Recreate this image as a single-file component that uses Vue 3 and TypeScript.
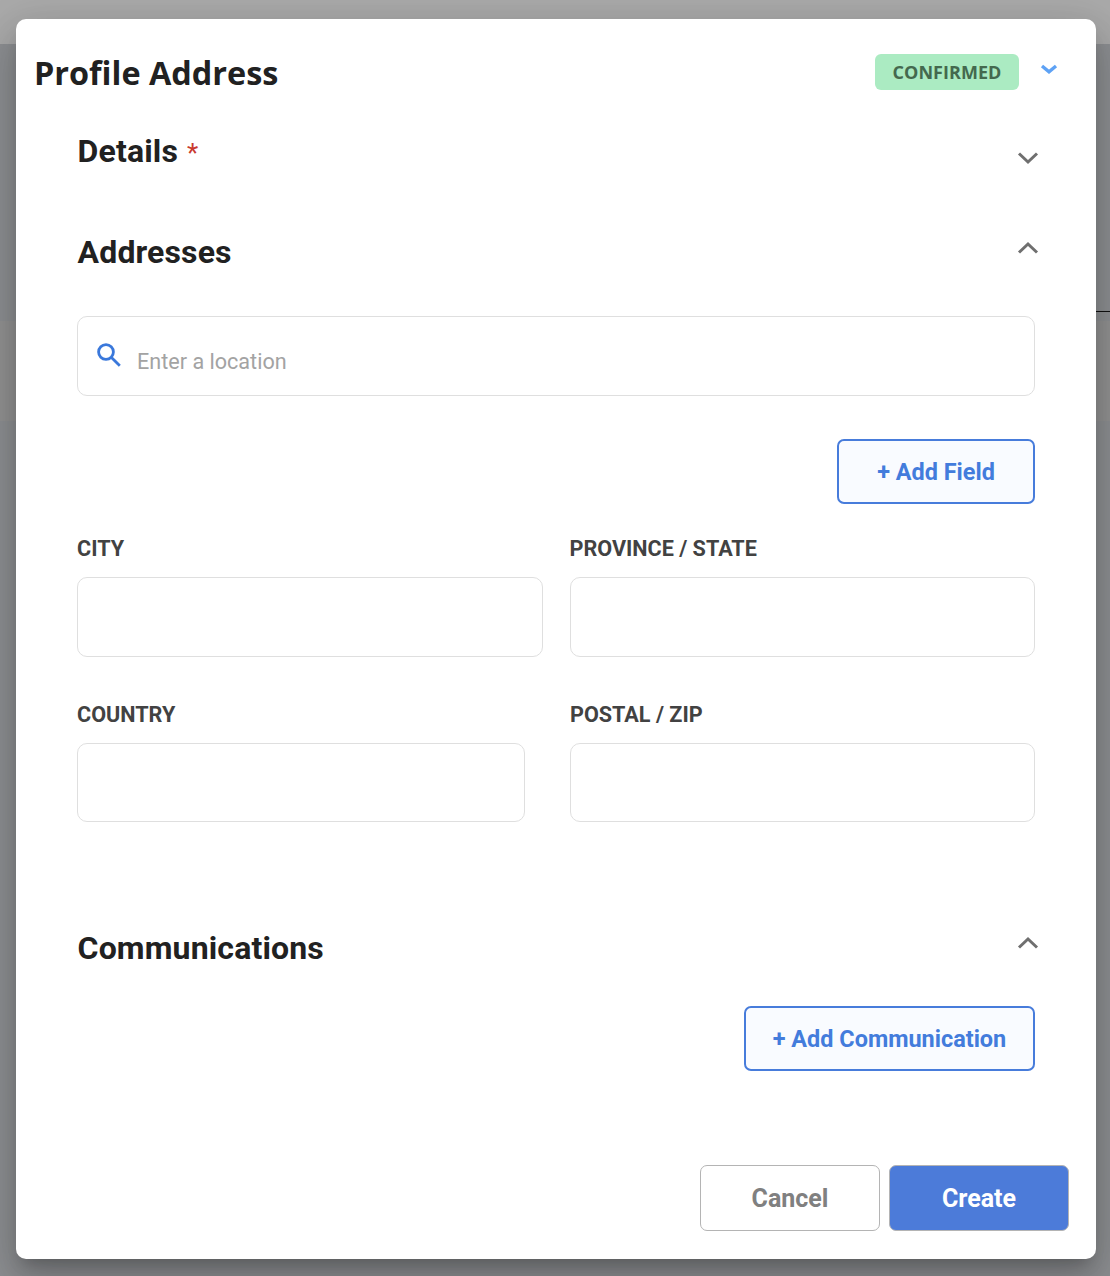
<script setup lang="ts">
interface Field { label: string; narrow: boolean }
const firstRow: Field[] = [
  { label: 'CITY', narrow: false },
  { label: 'PROVINCE / STATE', narrow: false },
]
const secondRow: Field[] = [
  { label: 'COUNTRY', narrow: true },
  { label: 'POSTAL / ZIP', narrow: false },
]
</script>

<template>
  <div class="page">
    <div class="band band-top"></div>
    <div class="band band-mid"></div>
    <div class="rule"></div>
    <section class="modal">
      <header class="head">
        <h1>Profile Address</h1>
        <div class="status">
          <span class="badge">CONFIRMED</span>
          <svg class="badge-chev" width="18" height="10" viewBox="0 0 18 10"><path d="M2 2l7 5.8L16 2" fill="none" stroke="#5ea2f5" stroke-width="3.4"/></svg>
        </div>
      </header>
      <div class="body">
        <div class="sec sec-details">
          <h2>Details <span class="req">*</span></h2>
          <svg class="chev" width="24" height="14" viewBox="0 0 24 14"><path d="M3 2.5l9 8.5 9-8.5" fill="none" stroke="#6f6f6f" stroke-width="3"/></svg>
        </div>
        <div class="sec sec-addr">
          <h2>Addresses</h2>
          <svg class="chev up" width="24" height="14" viewBox="0 0 24 14"><path d="M3 11.5l9-8.5 9 8.5" fill="none" stroke="#6f6f6f" stroke-width="3"/></svg>
        </div>
        <div class="search">
          <svg width="26" height="26" viewBox="0 0 26 26"><circle cx="10" cy="10" r="7.4" fill="none" stroke="#3a78db" stroke-width="2.8"/><path d="M15.2 15.2l8.6 8.6" stroke="#3a78db" stroke-width="2.8" fill="none"/></svg>
          <span>Enter a location</span>
        </div>
        <div class="actions actions-field"><button class="outline field-btn">+ Add Field</button></div>
        <div class="row row-one">
          <label v-for="f in firstRow" :key="f.label" class="field">
            <span>{{ f.label }}</span>
            <div class="box"></div>
          </label>
        </div>
        <div class="row row-two">
          <label v-for="f in secondRow" :key="f.label" class="field" :class="{ narrow: f.narrow }">
            <span>{{ f.label }}</span>
            <div class="box"></div>
          </label>
        </div>
        <div class="sec sec-comm">
          <h2>Communications</h2>
          <svg class="chev up" width="24" height="14" viewBox="0 0 24 14"><path d="M3 11.5l9-8.5 9 8.5" fill="none" stroke="#6f6f6f" stroke-width="3"/></svg>
        </div>
        <div class="actions actions-comm"><button class="outline comm-btn">+ Add Communication</button></div>
      </div>
      <footer class="foot">
        <button class="cancel">Cancel</button>
        <button class="create">Create</button>
      </footer>
    </section>
  </div>
</template>

<style>
html, body { margin: 0; padding: 0; }
</style>

<style scoped>
.page {
  position: relative;
  width: 1110px;
  height: 1276px;
  overflow: hidden;
  padding: 19px 14px 0 16px;
  box-sizing: border-box;
  background: #8e9093;
  font-family: Roboto, sans-serif;
}
.band { position: absolute; left: 0; right: 0; }
.band-top { top: 0; height: 44px; background: #aaaaaa; }
.band-mid { top: 321px; height: 100px; background: #939393; }
.rule { position: absolute; left: 1096px; right: 0; top: 311px; height: 1px; background: #111; }
.modal {
  position: relative;
  width: 1080px;
  height: 1240px;
  background: #fff;
  border-radius: 10px;
  box-shadow: 0 11px 15px -7px rgba(0,0,0,.2), 0 24px 38px 3px rgba(0,0,0,.14), 0 9px 46px 8px rgba(0,0,0,.12);
  display: flex;
  flex-direction: column;
}
.head { height: 71px; display: flex; justify-content: space-between; align-items: flex-start; padding: 0 38px 0 19px; }
h1 { margin: 31px 0 0 -1px; font: 700 32.4px/44px "Open Sans", sans-serif; color: #212121; }
.status { display: flex; align-items: flex-start; margin: 35px 0 0 0; }
.badge { width: 144px; height: 36px; border-radius: 6px; background: #abebc2; color: #44694e; font: 700 18px/36px "Open Sans", sans-serif; letter-spacing: .05px; text-align: center; }
.badge-chev { margin: 10px 0 0 21px; }
.body { flex: 1; padding: 0 61px; }
.sec { display: flex; justify-content: space-between; }
h2 { margin: 0 0 0 .6px; font: 700 32px/40px Roboto, sans-serif; letter-spacing: .14px; color: #212121; }
.req { color: #c9392e; font-size: 26px; font-weight: 400; margin-left: 1px; }
.chev { margin-right: -5px; }
.sec-details { height: 101px; padding-top: 41px; box-sizing: border-box; }
.sec-details .chev { margin-top: 20px; }
.sec-addr { height: 125px; padding-top: 41px; box-sizing: border-box; }
.chev.up { margin-top: 9px; }
.search { height: 80px; box-sizing: border-box; border: 1px solid #dfdfdf; border-radius: 10px; display: flex; align-items: center; gap: 15px; padding: 0 0 0 19px; color: #a3a3a3; font-size: 21.6px; }
.search span { margin-top: 11px; }
.search svg { margin-top: -2px; margin-left: -1px; }
.actions { display: flex; justify-content: flex-end; }
.outline { height: 65px; box-sizing: border-box; background: #f9fbff; border: 2px solid #477cdb; border-radius: 7px; color: #437cdc; font: 700 23.45px Roboto, sans-serif; padding: 0; }
.actions-field { margin-top: 43px; }
.field-btn { width: 198px; }
.row { display: flex; justify-content: space-between; }
.row-one { margin-top: 30px; }
.row-one .field { width: 465.5px; }
.row-two { margin-top: 43px; }
.field { width: 465px; display: block; }
.field.narrow { width: 448px; }
.field span { display: block; height: 29px; font: 700 21.6px/30px Roboto, sans-serif; color: #424242; }
.box { margin-top: 14px; height: 80px; box-sizing: border-box; border: 1px solid #dfdfdf; border-radius: 10px; background: #fff; }
.row-two .box { height: 79px; }
.sec-comm { height: 78px; padding-top: 106px; }
.sec-comm .chev.up { margin-top: 8px; }
.comm-btn { width: 291px; }
.foot { display: flex; justify-content: flex-end; gap: 9px; padding: 0 27px 28px 0; }
.foot button { width: 180px; height: 66px; box-sizing: border-box; border-radius: 7px; font: 700 25px Roboto, sans-serif; padding: 0; }
.cancel { background: #fff; border: 1px solid #b4b4b4; color: #808080; }
.create { background: #4c7bd9; border: 1px solid #b4b4b4; color: #fff; }
</style>
